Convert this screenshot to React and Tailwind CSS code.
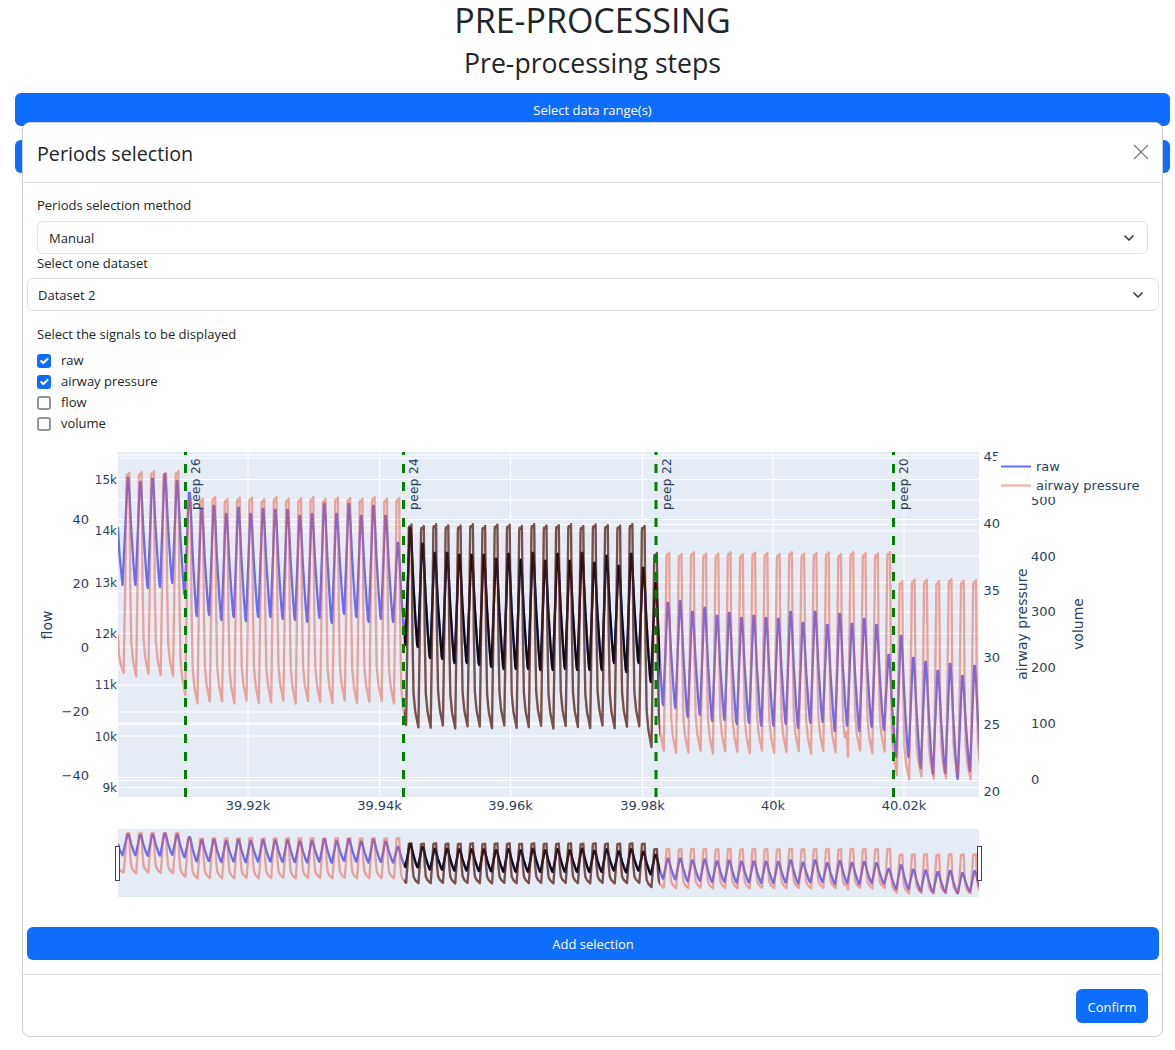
import { ChevronDown } from 'lucide-react';

// cycle period of the breathing signal, in plot pixels
const PERIOD = 12.27;
const FIRST_PEAK = 128;

const blueTops = [
  477, 481, 478, 473, 480,
  492, 508, 505, 513, 507, 513, 508, 509, 509, 515, 513, 503, 513, 503, 515, 505, 515, 542,
  527, 543, 552, 552, 554, 554, 554, 558, 553, 559, 552, 560, 553, 560, 552, 562, 555, 565, 553, 567, 582,
  602, 600, 611, 607, 615, 612, 617, 615, 617, 618, 611, 622, 611, 624, 613, 623, 618, 624, 654,
  635, 657, 661, 670, 663, 675, 665,
];
const blueTroughs = [
  585, 588, 587, 583, 595,
  616, 615, 620, 617, 621, 617, 617, 619, 620, 622, 618, 623, 614, 617, 622, 619, 622, 645,
  647, 658, 659, 663, 663, 665, 667, 669, 669, 669, 670, 670, 669, 670, 670, 670, 663, 672, 663, 682, 705,
  708, 717, 715, 721, 720, 724, 723, 726, 726, 724, 728, 723, 722, 731, 726, 731, 727, 730, 757,
  757, 768, 774, 773, 779, 771, 775,
];

const pinkLevel = (k) => {
  if (k < 5) return [472, 675];
  if (k < 23) return [498, 702];
  if (k < 43) return [525, 727];
  if (k < 63) return [553, 752];
  return [580, 778];
};

const wobble = (k, amount) => Math.sin(k * 2.4 + 0.7) * amount;

function buildRaw() {
  const pts = [[118, 527], [119.5, 555], [122.5, 585]];
  blueTops.forEach((top, k) => {
    const p = FIRST_PEAK + k * PERIOD;
    const d = blueTroughs[k] - top;
    pts.push([p - 0.4, top + 1], [p + 0.4, top + 1], [p + 1.4, top + d * 0.14], [p + 3.2, top + d * 0.48]);
    pts.push([p + 5.6, top + d * 0.82], [p + 7, top + d * 0.98], [p + 7.6, top + d]);
  });
  return pts;
}

function buildPressure() {
  const pts = [[118, 634], [119, 655], [121, 665], [123.6, 673]];
  blueTops.forEach((_, k) => {
    const p = FIRST_PEAK + k * PERIOD;
    const [top] = pinkLevel(k);
    const t = top + wobble(k, 1);
    let bot = pinkLevel(k + 1)[1] + wobble(k + 3, 1.5);
    if (k === 4) bot = 695;
    if (k === 22) bot = 725;
    if (k === 42) bot = 747;
    if (k === 62) bot = 775;
    const d = bot - t;
    // slanted rise, narrow plateau, quick fall, then a slow decay
    pts.push([p - 2.7, t + d * 0.53], [p - 1.4, t + 4], [p - 1, t + 2], [p + 0.6, t + 3], [p + 1.3, t]);
    pts.push([p + 1.7, t + d * 0.2], [p + 2.2, t + d * 0.53], [p + 3.3, t + d * 0.83], [p + 5, t + d * 0.92]);
    if (k === 58) {
      // small artefact in the pressure trace
      pts.push([p + 6.8, 732], [p + 8.3, 757]);
    } else {
      pts.push([p + 8.2, t + d]);
    }
  });
  return pts;
}

const toLine = (pts) => pts.map(([x, y]) => `${x.toFixed(1)},${y.toFixed(1)}`).join(' ');
const toMini = (pts) => pts.map(([x, y]) => [x, 829 + (y - 452) * 0.197]);

const rawPts = buildRaw();
const pressurePts = buildPressure();

const gridY = [
  455, 458, 479.5, 500, 519.5, 524.5, 531, 556, 582.5, 591, 612, 633.5, 647, 668, 685, 712, 723, 724.5, 736,
  777.5, 780.5, 787.5,
];
const gridX = [248, 379.5, 510.5, 642.5, 773, 904];
const peeps = [
  { x: 185.5, label: 'peep 26' },
  { x: 403.5, label: 'peep 24' },
  { x: 656, label: 'peep 22' },
  { x: 893.5, label: 'peep 20' },
];

const flowTicks = [['40', 524], ['20', 588], ['0', 652], ['\u221220', 716], ['\u221240', 780]];
const mainTicks = [['15k', 484], ['14k', 535], ['13k', 587], ['12k', 638], ['11k', 689], ['10k', 741], ['9k', 792]];
const airwayTicks = [['45', 461], ['40', 528], ['35', 595], ['30', 662], ['25', 729], ['20', 796]];
const volumeTicks = [['500', 505], ['400', 561], ['300', 616], ['200', 672], ['100', 728], ['0', 784]];
const xTicks = [['39.92k', 248], ['39.94k', 379.5], ['39.96k', 510.5], ['39.98k', 642.5], ['40k', 773], ['40.02k', 904]];

const Traces = ({ raw, pressure, plotClip, darkClip }) => (
  <g fill="none" strokeWidth="2.3" strokeLinejoin="round">
    <g clipPath={`url(#${plotClip})`}>
      <polyline points={raw} stroke="#636efa" />
    </g>
    <g clipPath={`url(#${darkClip})`}>
      <polyline points={raw} stroke="#000000" strokeOpacity="0.9" />
    </g>
    <g clipPath={`url(#${plotClip})`}>
      <polyline points={pressure} stroke="#ef553b" strokeOpacity="0.5" />
    </g>
    <g clipPath={`url(#${darkClip})`}>
      <polyline points={pressure} stroke="#000000" strokeOpacity="0.5" />
    </g>
  </g>
);

const Chart = () => (
  <svg
    width="1139"
    height="460"
    viewBox="23 445 1139 460"
    className="block font-['DejaVu_Sans',sans-serif] text-[12px] fill-[#2a3f5f]"
  >
    <defs>
      <clipPath id="mainPlot"><rect x="118" y="452" width="861" height="345" /></clipPath>
      <clipPath id="mainDark"><rect x="404" y="452" width="256" height="345" /></clipPath>
      <clipPath id="miniPlot"><rect x="118" y="829" width="861" height="68" /></clipPath>
      <clipPath id="miniDark"><rect x="404" y="829" width="256" height="68" /></clipPath>
    </defs>

    <rect x="118" y="452" width="861" height="345" fill="#e5ecf6" />
    <g stroke="#ffffff" strokeWidth="1">
      {gridY.map((y) => <line key={y} x1="118" x2="979" y1={y} y2={y} />)}
      {gridX.map((x) => <line key={x} x1={x} x2={x} y1="452" y2="797" />)}
    </g>

    <Traces raw={toLine(rawPts)} pressure={toLine(pressurePts)} plotClip="mainPlot" darkClip="mainDark" />

    {peeps.map((p) => (
      <g key={p.x}>
        <line x1={p.x} x2={p.x} y1="452" y2="797" stroke="#008000" strokeWidth="3" strokeDasharray="9 9" strokeDashoffset="6" />
        <text transform={`translate(${p.x + 14.5} 458) rotate(-90)`} textAnchor="end" className="tracking-[0.4px]">{p.label}</text>
      </g>
    ))}

    {flowTicks.map(([t, y]) => <text key={t} x="89" y={y} textAnchor="end" className="text-[13px]">{t}</text>)}
    {mainTicks.map(([t, y]) => <text key={t} x="117" y={y} textAnchor="end">{t}</text>)}
    {airwayTicks.map(([t, y]) => <text key={t} x="983.5" y={y} className="text-[13px]">{t}</text>)}
    {volumeTicks.map(([t, y]) => <text key={t} x="1031" y={y} className="text-[13px]">{t}</text>)}
    {xTicks.map(([t, x]) => <text key={t} x={x} y="810" textAnchor="middle" className="text-[13px]">{t}</text>)}

    <text transform="translate(52 625) rotate(-90)" textAnchor="middle" className="text-[14px]">flow</text>
    <text transform="translate(1027 624) rotate(-90)" textAnchor="middle" className="text-[14px]">airway pressure</text>
    <text transform="translate(1083 624) rotate(-90)" textAnchor="middle" className="text-[14px]">volume</text>

    {/* legend sits on top of the clipped axis labels */}
    <rect x="996" y="456" width="150" height="41" fill="#ffffff" />
    <line x1="1001" x2="1031" y1="466.5" y2="466.5" stroke="#636efa" strokeWidth="2" />
    <text x="1036" y="471" className="text-[13px]">raw</text>
    <line x1="1001" x2="1031" y1="485.5" y2="485.5" stroke="#ef553b" strokeOpacity="0.5" strokeWidth="2" />
    <text x="1036" y="490" className="text-[13px]">airway pressure</text>

    {/* range slider */}
    <rect x="118" y="829" width="861" height="68" fill="#e5ecf6" />
    <Traces raw={toLine(toMini(rawPts))} pressure={toLine(toMini(pressurePts))} plotClip="miniPlot" darkClip="miniDark" />
    <rect x="115.5" y="846.5" width="4" height="34" fill="#ffffff" stroke="#444444" />
    <rect x="977.5" y="846.5" width="4" height="34" fill="#ffffff" stroke="#444444" />
  </svg>
);

const SelectBox = ({ value, className }) => (
  <div className={`flex items-center justify-between border border-[#dee2e6] rounded-md h-[33px] text-[13px] text-[#212529] ${className}`}>
    <span className="mt-[2px]">{value}</span>
    <ChevronDown className="w-4 h-4 text-[#343a40]" strokeWidth={2.5} />
  </div>
);

const CheckRow = ({ label, checked }) => (
  <div className="flex items-center h-[21px] gap-[10px]">
    {checked ? (
      <span className="w-[14px] h-[14px] rounded-[3px] bg-[#0d6efd] flex items-center justify-center">
        <svg viewBox="0 0 20 20" className="w-[14px] h-[14px]" fill="none">
          <path d="m6 10 3 3 6-6" stroke="#ffffff" strokeWidth="3" strokeLinecap="round" strokeLinejoin="round" />
        </svg>
      </span>
    ) : (
      <span className="w-[14px] h-[14px] rounded-[3px] border-2 border-[#8f949b] bg-white" />
    )}
    <span className="text-[13px] text-[#212529]">{label}</span>
  </div>
);

const App = () => (
  <div className="relative min-h-[1050px] bg-white font-['Open_Sans',sans-serif] text-[#212529]">
    <h1 className="text-center text-[34px] leading-[40px] h-[40px] ml-[10px]">PRE-PROCESSING</h1>
    <h2 className="text-center text-[26.6px] leading-[34px] h-[34px] mt-[6px] ml-[10px]">Pre-processing steps</h2>

    <button className="block mt-[13px] ml-[15px] mr-[5px] w-[1155px] h-[33px] rounded-md bg-[#0d6efd] text-white text-[13px]">
      <span className="relative top-[1px]">Select data range(s)</span>
    </button>
    <button className="block mt-[14px] ml-[15px] mr-[5px] w-[1155px] h-[33px] rounded-md bg-[#0d6efd] text-white text-[13px]">
      &nbsp;
    </button>

    {/* Modal */}
    <div className="absolute top-[122px] left-[22px] w-[1141px] h-[915px] bg-white border border-[#cfcfcf] rounded-lg flex flex-col">
      <div className="h-[60px] shrink-0 border-b border-[#dee2e6] flex items-center justify-between pl-[14px] pr-[13px]">
        <span className="text-[19.7px] mt-[2px]">Periods selection</span>
        <svg viewBox="0 0 16 16" className="w-4 h-4 mb-[1px]" fill="none" stroke="#7f7f7f" strokeWidth="1.4">
          <path d="M1 1l14 14M15 1 1 15" />
        </svg>
      </div>

      <div className="px-[14px] pt-[12px]">
        <div className="text-[13px] leading-[21px] h-[21px]">Periods selection method</div>
        <SelectBox value="Manual" className="mt-[5px] pl-[11px] pr-[10px]" />
        <div className="text-[13px] leading-[20px] h-[20px] -mt-[1px]">Select one dataset</div>
        <SelectBox value="Dataset 2" className="mt-[5px] -ml-[10px] -mr-[11px] pl-[10px] pr-[12px]" />
        <div className="text-[13px] leading-[21px] h-[21px] mt-[13px]">Select the signals to be displayed</div>
        <div className="mt-[5px]">
          <CheckRow label="raw" checked />
          <CheckRow label="airway pressure" checked />
          <CheckRow label="flow" />
          <CheckRow label="volume" />
        </div>
      </div>

      <div className="mt-[11px]">
        <Chart />
      </div>

      <div className="px-[4px] mt-[22px]">
        <button className="block w-[1132px] h-[33px] rounded-md bg-[#0d6efd] text-white text-[13px]">
          <span className="relative top-[1px]">Add selection</span>
        </button>
      </div>

      <div className="mt-[14px] border-t border-[#dee2e6] flex justify-end pt-[14px] pr-[14px]">
        <button className="w-[72px] h-[34px] rounded-md bg-[#0d6efd] text-white text-[13px]">
          <span className="relative top-[2px]">Confirm</span>
        </button>
      </div>
    </div>
  </div>
);

export default App;
